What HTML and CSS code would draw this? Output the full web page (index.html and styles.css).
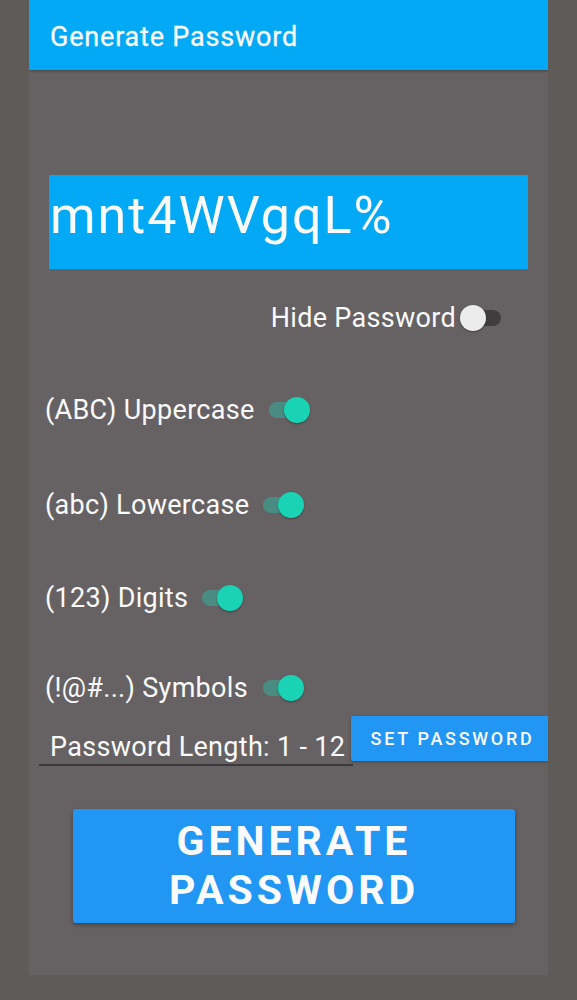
FILE: index.html
```html
<!DOCTYPE html>
<html>
<head>
<meta charset="UTF-8">
<title>Generate Password</title>
<link rel="stylesheet" href="styles.css">
</head>
<body>
<div class="panel">
	<div class="toolbar">Generate Password</div>

	<div class="password_box">mnt4WVgqL%</div>

	<div class="hide_row">
		<span class="label">Hide Password</span>
		<span class="switch switch_off"><span class="track"></span><span class="thumb"></span></span>
	</div>

	<div class="option_row row_upper">
		<span class="label">(ABC) Uppercase</span>
		<span class="switch switch_on"><span class="track"></span><span class="thumb"></span></span>
	</div>
	<div class="option_row row_lower">
		<span class="label">(abc) Lowercase</span>
		<span class="switch switch_on"><span class="track"></span><span class="thumb"></span></span>
	</div>
	<div class="option_row row_digits">
		<span class="label">(123) Digits</span>
		<span class="switch switch_on"><span class="track"></span><span class="thumb"></span></span>
	</div>
	<div class="option_row row_symbols">
		<span class="label">(!@#...) Symbols</span>
		<span class="switch switch_on"><span class="track"></span><span class="thumb"></span></span>
	</div>

	<div class="length_row">
		<div class="length_input">Password Length: 1 - 12</div>
		<div class="set_button">SET PASSWORD</div>
	</div>

	<div class="generate_button">GENERATE<br>PASSWORD</div>
</div>
</body>
</html>
```

FILE: styles.css
```css
body {
	margin: 0;
	background: #5e5b59;
	font-family: Roboto, "Noto Sans", sans-serif;
	color: #fafafa;
}

.panel {
	width: 519px;
	height: 975px;
	margin: 0 auto;
	background: #666264;
	overflow: hidden;
}

.toolbar {
	height: 70px;
	box-sizing: border-box;
	padding: 3px 0 0 21px;
	background: #03a9f4;
	display: flex;
	align-items: center;
	font-size: 27px;
	letter-spacing: 0.8px;
	-webkit-text-stroke: 0.3px #fafafa;
	box-shadow: 0 1px 3px rgba(0, 0, 0, 0.3);
}

.password_box {
	margin: 105px 20px 0;
	height: 94px;
	box-sizing: border-box;
	padding: 11px 0 0 1px;
	background: #03a9f4;
	font-size: 52px;
	letter-spacing: 2px;
	line-height: 1.17;
}

.label {
	font-size: 27px;
	letter-spacing: 0.3px;
}

/* переключатели */
.switch {
	position: relative;
	display: inline-block;
	width: 42px;
	height: 26px;
}
.switch .track {
	position: absolute;
	left: 1px;
	right: 1px;
	top: 5px;
	height: 16px;
	border-radius: 8px;
}
.switch .thumb {
	position: absolute;
	top: 0;
	width: 26px;
	height: 26px;
	border-radius: 50%;
	box-shadow: 0 1px 2px rgba(0, 0, 0, 0.35);
}
.switch_off .track {
	background: #3f3d3e;
}
.switch_off .thumb {
	left: 0;
	background: #ececec;
}
.switch_on .track {
	background: #4a8c82;
}
.switch_on .thumb {
	right: 0;
	background: #19d3b4;
}

.hide_row {
	margin-top: 29px;
	height: 40px;
	display: flex;
	align-items: center;
	justify-content: flex-end;
	padding-right: 46px;
	gap: 4px;
}

.option_row {
	height: 40px;
	display: flex;
	align-items: center;
	padding-left: 16px;
	gap: 13px;
}
.row_upper { margin-top: 52px; }
.row_lower { margin-top: 55px; }
.row_digits { margin-top: 53px; gap: 13px; }
.row_symbols { margin-top: 50px; gap: 14px; }

.length_row {
	margin-top: 8px;
	display: flex;
	align-items: flex-start;
}
.length_input {
	margin-left: 10px;
	width: 314px;
	height: 50px;
	box-sizing: border-box;
	padding: 0 0 0 11px;
	border-bottom: 2px solid #3b393a;
	display: flex;
	align-items: flex-end;
	font-size: 27px;
	letter-spacing: 0.3px;
	line-height: 1.17;
	white-space: nowrap;
}
.set_button {
	margin-left: -2px;
	flex: 1;
	height: 45px;
	box-sizing: border-box;
	padding-left: 6px;
	background: #2196f3;
	border-radius: 2px 0 0 2px;
	display: flex;
	align-items: center;
	justify-content: center;
	font-size: 18px;
	font-weight: 500;
	letter-spacing: 2.7px;
	box-shadow: 0 1px 3px rgba(0, 0, 0, 0.3);
}

.generate_button {
	margin: 43px 0 0 44px;
	width: 442px;
	height: 114px;
	background: #2196f3;
	border-radius: 3px;
	box-shadow: 0 2px 4px rgba(0, 0, 0, 0.35);
	display: flex;
	align-items: center;
	justify-content: center;
	text-align: center;
	font-size: 41px;
	font-weight: 700;
	line-height: 49px;
	letter-spacing: 4px;
}
```
